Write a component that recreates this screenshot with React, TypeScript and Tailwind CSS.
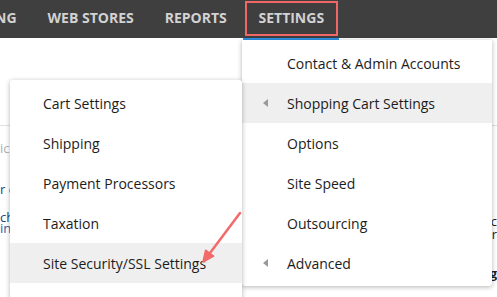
import React from 'react';

const navItems = ['NG', 'WEB STORES', 'REPORTS'];

const settingsMenu = [
  { label: 'Contact & Admin Accounts', sub: false, active: false },
  { label: 'Shopping Cart Settings', sub: true, active: true },
  { label: 'Options', sub: false, active: false },
  { label: 'Site Speed', sub: false, active: false },
  { label: 'Outsourcing', sub: false, active: false },
  { label: 'Advanced', sub: true, active: false },
];

const cartMenu = [
  { label: 'Cart Settings', active: false },
  { label: 'Shipping', active: false },
  { label: 'Payment Processors', active: false },
  { label: 'Taxation', active: false },
  { label: 'Site Security/SSL Settings', active: true },
];

function Caret() {
  return (
    <svg width="5" height="8" viewBox="0 0 5 8" className="shrink-0">
      <path d="M5 0 L0 4 L5 8 Z" fill="#9a9a9a" />
    </svg>
  );
}

export default function App() {
  return (
    <div className="relative w-[497px] h-[297px] overflow-hidden bg-white font-['Open_Sans',sans-serif]">
      {/* top bar */}
      <div className="h-[38px] bg-[#3f3f3f] flex items-center text-[14px] font-bold text-[#d2d2d2]">
        <div className="flex items-center gap-[31px] -ml-[5px] -mt-[3px]">
          {navItems.map(n => (
            <span key={n}>{n}</span>
          ))}
        </div>
        <div className="ml-[18px] h-[35px] w-[93px] -mt-[2px] border-2 border-[#ef6767] flex items-center justify-center">
          <span className="-mt-[2px]">SETTINGS</span>
        </div>
      </div>
      <div className="ml-[243px] w-[96px] h-[3px] bg-[#2f93e8]" />

      {/* page behind */}
      <div className="mt-[84px] h-px bg-[#e2e2e2]" />
      <div className="flex justify-between text-[13px] leading-[11px]">
        <div className="flex flex-col text-[#1d3f80]">
          <span className="mt-[17px] text-[#b0b0b0]">ic</span>
          <span className="mt-[30px]">r c</span>
          <span className="mt-[17px]">ch</span>
          <span className="text-[#3560a8]">in</span>
        </div>
        <div className="flex flex-col items-end text-[#222]">
          <span className="mt-[90px]">c</span>
          <span className="mt-[2px]">r</span>
          <span className="mt-[28px] font-bold">g</span>
        </div>
      </div>

      {/* settings dropdown */}
      <div className="absolute left-[242px] top-[40px] w-[250px] bg-white pt-[3px] pb-[3px] shadow-[0_1px_5px_rgba(0,0,0,0.3)] rounded-b-[3px]">
        {settingsMenu.map(m => (
          <div
            key={m.label}
            className={`h-[40px] flex items-center text-[14px] text-[#1c1c1c] ${m.active ? 'bg-[#efefef]' : ''}`}
          >
            <div className="w-[45px] flex justify-end pr-[19px]">{m.sub && <Caret />}</div>
            {m.label}
          </div>
        ))}
      </div>

      {/* shopping cart submenu */}
      <div className="absolute left-[10px] top-[80px] w-[232px] h-[230px] bg-white pt-[3px] shadow-[0_1px_5px_rgba(0,0,0,0.3)] rounded-[3px]">
        {cartMenu.map(m => (
          <div
            key={m.label}
            className={`h-[40px] flex items-center pl-[33px] text-[14px] text-[#1c1c1c] ${m.active ? 'bg-[#efefef]' : ''}`}
          >
            {m.label}
          </div>
        ))}
      </div>

      {/* annotation arrow */}
      <svg className="absolute left-0 top-0" width="497" height="297">
        <line x1="240" y1="213" x2="210" y2="253" stroke="#f26a6a" strokeWidth="2.5" strokeLinecap="round" />
        <path d="M203 262 L205.6 250.2 L213.6 256.2 Z" fill="#f26a6a" stroke="#f26a6a" strokeWidth="1.5" strokeLinejoin="round" />
      </svg>
    </div>
  );
}
